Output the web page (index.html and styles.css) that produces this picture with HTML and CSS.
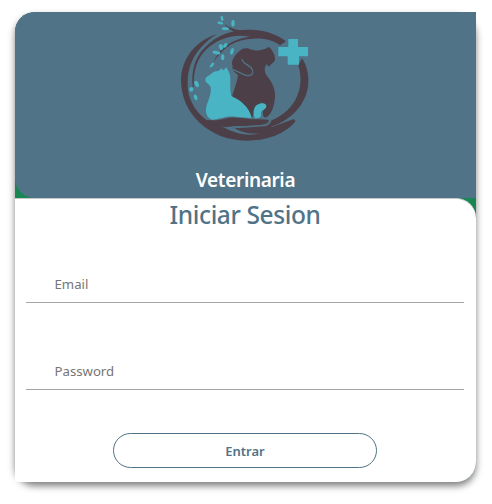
FILE: index.html
```html
<!DOCTYPE html>
<html lang="es">
<head>
<meta charset="utf-8">
<title>Veterinaria</title>
<link rel="stylesheet" href="styles.css">
</head>
<body>
<main class="card">
  <header class="brand">
    <svg class="logo" viewBox="0 12 450 408" aria-hidden="true">
      <g fill="#4c3f48">
        <path d="M140 79C78 98 34 151 33 217C33 318 120 398 228 398C295 398 345 377 375 342C378 335 372 331 365 335L304 358C306 350 307 341 303 334C298 344 291 350 280 352C258 359 220 354 193 359C207 371 240 379 270 376C230 387 184 373 154 354C139 342 124 336 109 336C69 306 51 264 53 222C54 159 88 112 140 79Z"/>
        <path d="M68 238C64 190 72 151 105 118C143 77 200 61 256 66C292 69 323 81 348 100L330 112C302 93 277 91 250 92C198 93 160 116 130 163C148 119 190 91 239 86C190 76 140 94 110 123C80 153 70 188 71 238Z"/>
        <path d="M164 49C184 63 207 69 240 70L212 78C190 72 173 63 164 49Z"/>
        <path d="M396 151C424 194 420 251 394 289C372 323 339 345 302 357L305 337C338 323 362 302 377 274C397 236 393 201 385 172Z"/>
        <path d="M234 121C254 132 280 127 296 117C304 120 316 142 315 153C313 166 302 167 298 176L289 169C281 183 284 196 294 208C309 227 319 250 314 278C310 300 304 317 292 326C281 333 278 321 279 315C276 306 291 297 289 291C281 281 262 289 258 296C249 307 252 319 246 329C240 303 213 282 186 266C192 245 202 220 204 201C195 193 185 188 188 175C181 161 193 142 206 131C215 122 223 119 234 121Z"/>
        <path d="M109 335C154 342 166 325 198 329C222 329 239 335 264 334C280 335 295 333 297 339C292 352 260 354 198 354L164 358Z"/>
      </g>
      <path d="M187 184C206 189 219 203 235 203C251 202 251 189 244 180C231 168 217 166 216 153" fill="none" stroke="#517387" stroke-width="4"/>
      <path d="M196 358C233 358 263 352 286 353C297 349 303 341 302 330" fill="none" stroke="#517387" stroke-width="4"/>
      <g fill="#49b5c4">
        <path d="M153 180L160 187L169 178L176 191C186 208 177 233 184 264C211 276 239 297 244 330L204 327C168 322 158 331 130 335C115 334 106 319 108 302C111 281 125 264 122 238C118 225 108 228 106 216C105 205 121 203 129 193C136 187 150 193 153 180Z"/>
        <path d="M254 330C247 309 252 291 269 287C283 283 292 292 288 299C282 307 271 306 273 319C275 327 266 333 254 330Z"/>
        <path d="M355 93H384V117H414V145H387V170H353V145H325V117H355Z"/>
        <g>
          <ellipse cx="156" cy="31" rx="4" ry="8" transform="rotate(-15 156 31)"/>
          <ellipse cx="151" cy="45" rx="9" ry="4" transform="rotate(12 151 45)"/>
          <ellipse cx="189" cy="46" rx="5" ry="10"/>
          <ellipse cx="166" cy="62" rx="11" ry="4"/>
          <ellipse cx="166" cy="112" rx="5" ry="8" transform="rotate(40 166 112)"/>
          <ellipse cx="153" cy="117" rx="6" ry="9" transform="rotate(-20 153 117)"/>
          <ellipse cx="139" cy="134" rx="12" ry="5" transform="rotate(12 139 134)"/>
          <ellipse cx="186" cy="130" rx="5" ry="10" transform="rotate(15 186 130)"/>
          <ellipse cx="158" cy="148" rx="5" ry="9"/>
          <ellipse cx="126" cy="171" rx="4" ry="9" transform="rotate(40 126 171)"/>
          <ellipse cx="80" cy="228" rx="6" ry="10" transform="rotate(-25 80 228)"/>
          <ellipse cx="64" cy="244" rx="6" ry="7"/>
          <ellipse cx="77" cy="268" rx="5" ry="9" transform="rotate(-20 77 268)"/>
        </g>
      </g>
    </svg>
    <div class="name"><span>Veterinaria</span></div>
  </header>
  <form class="login">
    <h1 class="title"><span>Iniciar Sesion</span></h1>
    <input class="field" type="email" placeholder="Email" aria-label="Email">
    <input class="field password" type="password" placeholder="Password" aria-label="Password">
    <button class="submit" type="button">Entrar</button>
  </form>
</main>
</body>
</html>
```
FILE: styles.css
```css
* { box-sizing: border-box; }
body {
  margin: 0;
  padding: 12px 16px 22px 15px;
  background: #fff;
  font-family: "Noto Sans", "Open Sans", sans-serif;
}
.card {
  height: 470px;
  background: #198754;
  border-radius: 20px;
  box-shadow: 0 4px 7px rgba(0, 0, 0, .5);
}
.brand {
  height: 186px;
  display: flex;
  flex-direction: column;
  align-items: center;
  background: #517387;
  border-radius: 20px 0 0 20px;
}
.logo {
  width: 150px;
  height: 136px;
  margin-right: 2px;
  flex: none;
}
.name {
  margin-top: 18px;
  color: #fff;
  font-size: 19px;
  line-height: 28px;
  font-weight: 600;
  letter-spacing: -.35px;
}
.login {
  height: 284px;
  display: flex;
  flex-direction: column;
  padding: 0 12px 0 11px;
  background: #fff;
  border-top: 1px solid #c6c8ca;
  border-radius: 0 20px 20px 0;
}
.title {
  margin: 0;
  color: #517387;
  font-size: 24.5px;
  line-height: 32px;
  font-weight: 500;
  text-align: center;
  letter-spacing: -.4px;
}
.field {
  width: 100%;
  height: 38px;
  margin: 34px 0 0;
  padding: 0 28.5px;
  border: 0;
  border-bottom: 1px solid #a5a5a5;
  border-radius: 0;
  background: transparent;
  font: 13.2px "Noto Sans", "Open Sans", sans-serif;
  outline: 0;
}
.field::placeholder { color: #757575; opacity: 1; }
.password { margin-top: 49px; }
.submit {
  width: 264px;
  height: 35px;
  margin: 43px 0 0 87px;
  padding: 0;
  color: #517387;
  background: transparent;
  border: 1px solid #517387;
  border-radius: 18px;
  font: 600 13px "Noto Sans", "Open Sans", sans-serif;
}
```
